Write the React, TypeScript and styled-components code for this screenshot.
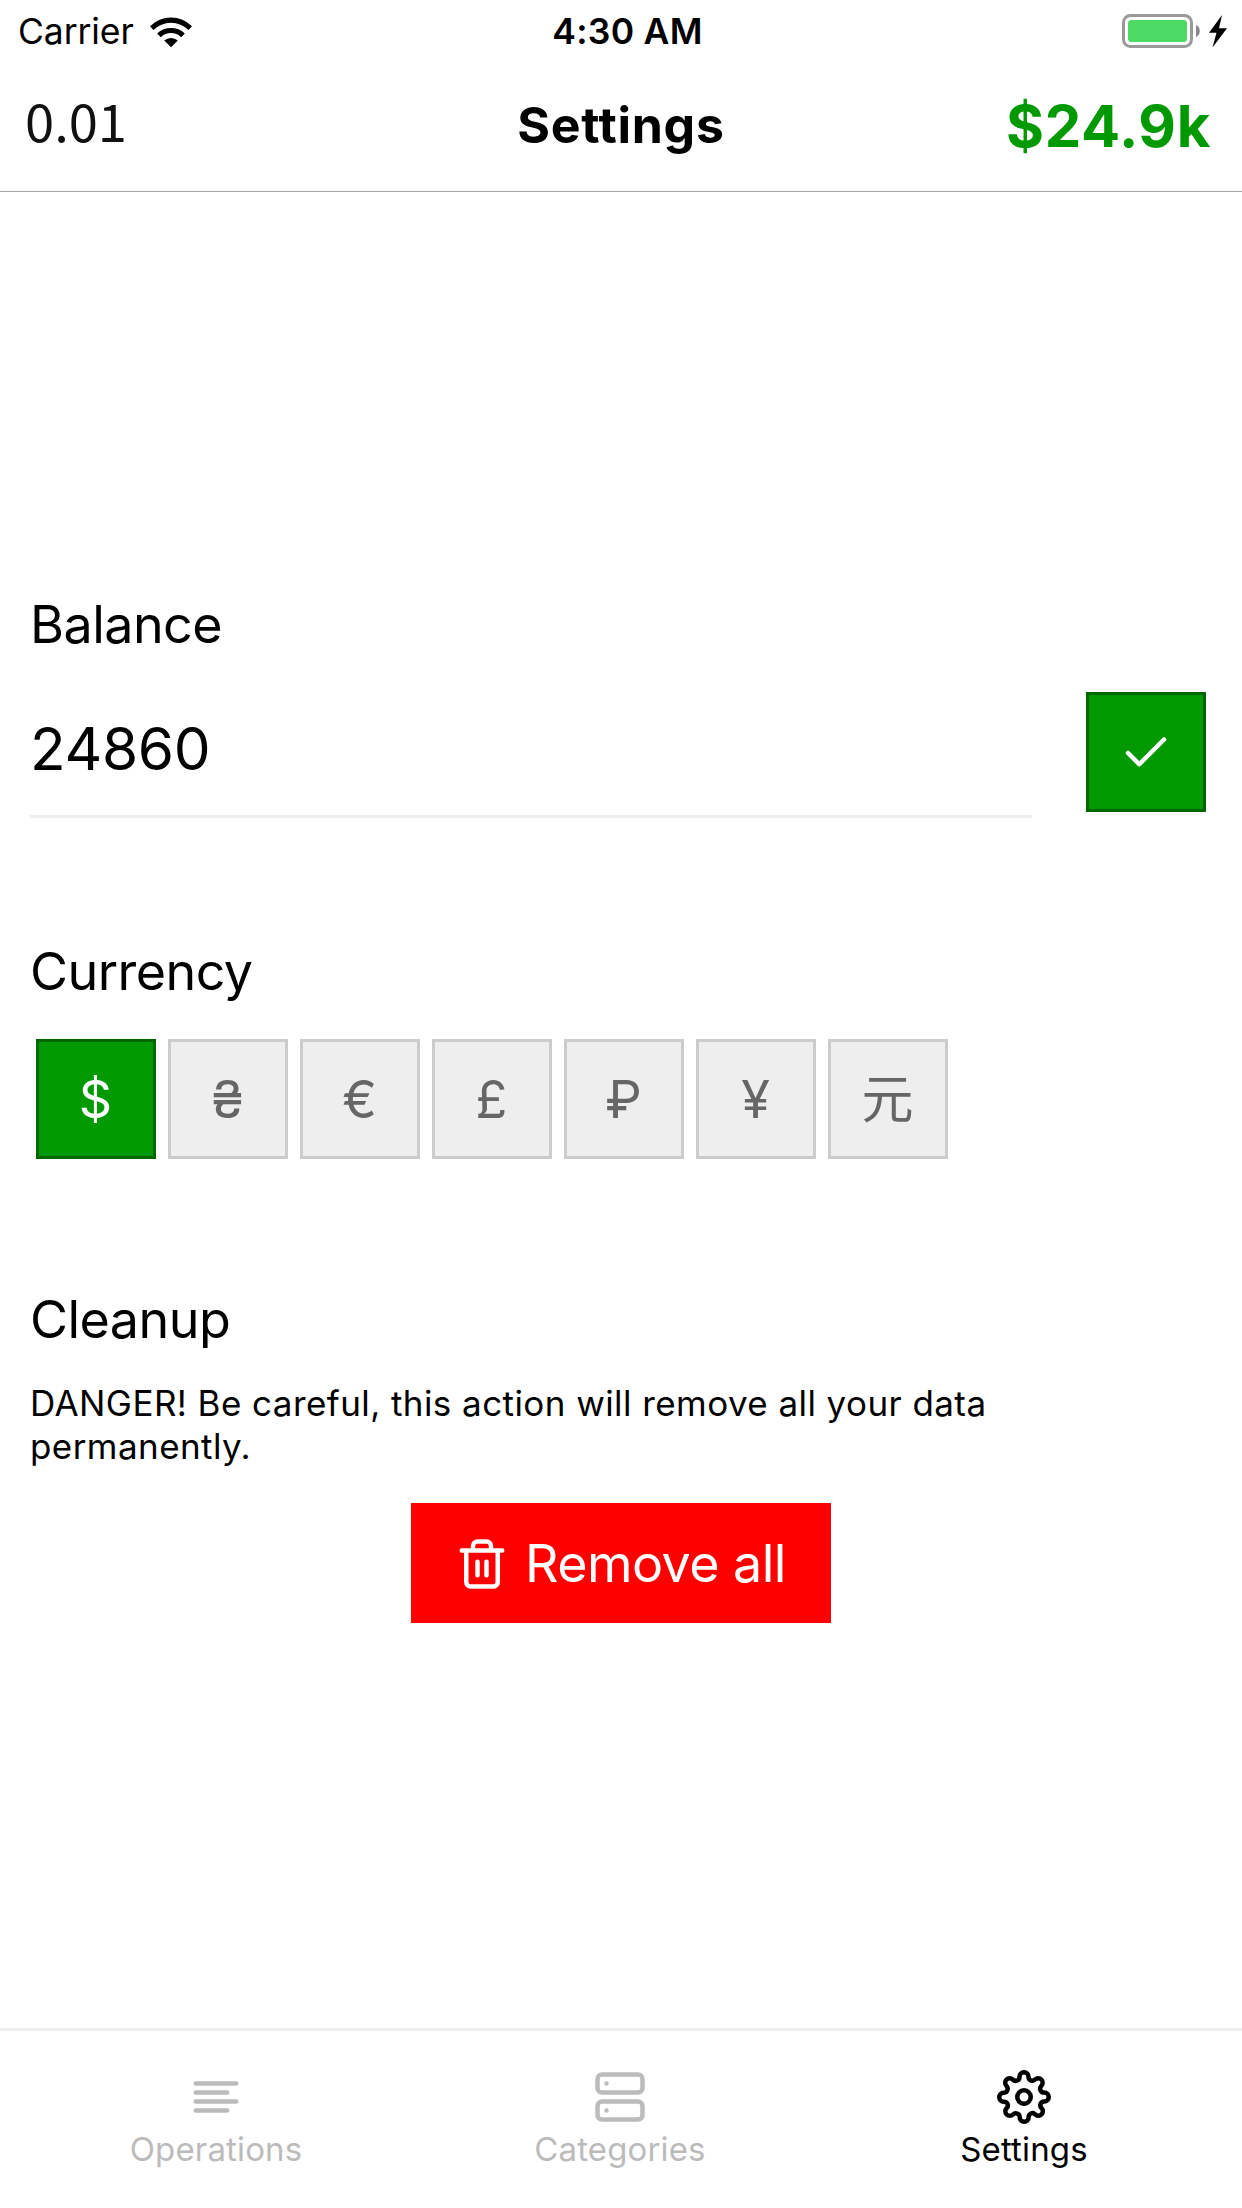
import React from 'react';
import styled, { createGlobalStyle } from 'styled-components';

const GlobalStyle = createGlobalStyle`
  * { box-sizing: border-box; }
  body { margin: 0; background: #fff; }
`;

const Screen = styled.div`
  width: 1242px;
  height: 2208px;
  display: flex;
  flex-direction: column;
  overflow: hidden;
  background: #fff;
  color: #000;
  font-family: Inter, "Liberation Sans", "Noto Sans CJK SC", sans-serif;
`;

const StatusBar = styled.div`
  display: grid;
  grid-template-columns: 1fr auto 1fr;
  align-items: center;
  height: 60px;
  padding: 2px 14px 0 18px;
  font-size: 35.5px;
  line-height: 60px;
`;

const StatusGroup = styled.div<{ $end?: boolean }>`
  display: flex;
  align-items: center;
  justify-content: ${(p) => (p.$end ? 'flex-end' : 'flex-start')};
  padding-bottom: ${(p) => (p.$end ? 3 : 0)}px;
`;

const Carrier = styled.span`
  width: 132px;
  letter-spacing: -0.1px;
`;

const Clock = styled.span`
  font-weight: 600;
  letter-spacing: 0.3px;
  padding-left: 9px;
`;

const Header = styled.header`
  display: grid;
  grid-template-columns: 1fr auto 1fr;
  align-items: center;
  height: 132px;
  padding: 0 31px 0 25px;
  border-bottom: 1px solid #a7a7aa;
`;

const Version = styled.span`
  padding-bottom: 14px;
  font-family: "Noto Sans CJK SC", sans-serif;
  font-size: 52.5px;
  line-height: 60px;
  color: #111;
`;

const Title = styled.h1`
  margin: 0;
  padding: 0 0 2px 6px;
  font-size: 50px;
  line-height: 64px;
  font-weight: 700;
  letter-spacing: 0.7px;
`;

const Total = styled.span`
  text-align: right;
  font-size: 58px;
  line-height: 64px;
  font-weight: 700;
  letter-spacing: 0.7px;
  color: #090;
`;

const Main = styled.main`
  flex: 1;
  padding: 401px 36px 0 30px;
`;

const Section = styled.section<{ $gap?: number }>`
  margin-top: ${(p) => p.$gap ?? 0}px;
`;

const Heading = styled.h2`
  margin: 0;
  font-size: 52px;
  line-height: 64px;
  font-weight: 400;
  letter-spacing: -0.53px;
`;

const BalanceRow = styled.div`
  display: flex;
  justify-content: space-between;
  margin-top: 35px;
`;

const BalanceField = styled.div`
  width: 1002px;
  padding-bottom: 9px;
  border-bottom: 3px solid #eee;
  font-size: 58.5px;
  line-height: 114px;
  letter-spacing: -0.3px;
`;

const Square = styled.button<{ $active?: boolean }>`
  display: flex;
  align-items: center;
  justify-content: center;
  flex: none;
  width: 120px;
  height: 120px;
  padding: 1px 1px 0 0;
  border: 3px solid ${(p) => (p.$active ? '#060' : '#ccc')};
  border-radius: 0;
  background: ${(p) => (p.$active ? '#090' : '#eee')};
  color: ${(p) => (p.$active ? '#fff' : '#666')};
  font-family: inherit;
  font-size: 52px;
  line-height: 65px;
`;

const Currencies = styled.div`
  display: flex;
  gap: 12px;
  margin-top: 35px;
  padding-left: 6px;
`;

const Warning = styled.p`
  width: 1000px;
  margin: 30px 0 35px;
  font-size: 35px;
  line-height: 43px;
  letter-spacing: 0.43px;
`;

const RemoveButton = styled.button`
  display: flex;
  align-items: center;
  gap: 16px;
  width: 420px;
  height: 120px;
  margin-left: 381px;
  padding: 1px 0 0 44px;
  border: 0;
  background: #f00;
  color: #fff;
  font-family: inherit;
  font-size: 52px;
  line-height: 65px;
  letter-spacing: -0.55px;
  white-space: nowrap;
`;

const TabBar = styled.nav`
  display: flex;
  height: 180px;
  padding: 0 16px 0 14px;
  border-top: 3px solid #eee;
`;

const Tab = styled.div<{ $active?: boolean }>`
  flex: 1;
  display: flex;
  flex-direction: column;
  align-items: center;
  padding-top: 39px;
  color: ${(p) => (p.$active ? '#000' : '#bbb')};
`;

const TabLabel = styled.span`
  margin-top: 4px;
  font-size: 33px;
  line-height: 42px;
  letter-spacing: 0.14px;
`;

const Icon = styled.svg.attrs({ viewBox: '0 0 24 24' })`
  flex: none;
  display: block;
  width: 54px;
  height: 54px;
  fill: none;
  stroke: currentColor;
  stroke-width: 2;
  stroke-linecap: round;
  stroke-linejoin: round;
`;

const CheckIcon = () => (
  <Icon>
    <path d="M20 6 9 17l-5-5" />
  </Icon>
);

const TrashIcon = () => (
  <Icon>
    <path d="M3 6h18M19 6v14a2 2 0 0 1-2 2H7a2 2 0 0 1-2-2V6m3 0V4a2 2 0 0 1 2-2h4a2 2 0 0 1 2 2v2M10 11v6M14 11v6" />
  </Icon>
);

const ListIcon = () => (
  <Icon>
    <path d="M3 6h18M3 10h14M3 14h18M3 18h14" />
  </Icon>
);

const ServerIcon = () => (
  <Icon>
    <rect x="2" y="2" width="20" height="8" rx="2" />
    <rect x="2" y="14" width="20" height="8" rx="2" />
    <path d="M6 6h.01M6 18h.01" />
  </Icon>
);

const GearIcon = () => (
  <Icon>
    <circle cx="12" cy="12" r="3" />
    <path d="M19.4 15a1.65 1.65 0 0 0 .33 1.82l.06.06a2 2 0 0 1 0 2.83 2 2 0 0 1-2.83 0l-.06-.06a1.65 1.65 0 0 0-1.82-.33 1.65 1.65 0 0 0-1 1.51V21a2 2 0 0 1-2 2 2 2 0 0 1-2-2v-.09A1.65 1.65 0 0 0 9 19.4a1.65 1.65 0 0 0-1.82.33l-.06.06a2 2 0 0 1-2.83 0 2 2 0 0 1 0-2.83l.06-.06a1.65 1.65 0 0 0 .33-1.82 1.65 1.65 0 0 0-1.51-1H3a2 2 0 0 1-2-2 2 2 0 0 1 2-2h.09A1.65 1.65 0 0 0 4.6 9a1.65 1.65 0 0 0-.33-1.82l-.06-.06a2 2 0 0 1 0-2.83 2 2 0 0 1 2.83 0l.06.06a1.65 1.65 0 0 0 1.82.33H9a1.65 1.65 0 0 0 1-1.51V3a2 2 0 0 1 2-2 2 2 0 0 1 2 2v.09a1.65 1.65 0 0 0 1 1.51 1.65 1.65 0 0 0 1.82-.33l.06-.06a2 2 0 0 1 2.83 0 2 2 0 0 1 0 2.83l-.06.06a1.65 1.65 0 0 0-.33 1.82V9a1.65 1.65 0 0 0 1.51 1H21a2 2 0 0 1 2 2 2 2 0 0 1-2 2h-.09a1.65 1.65 0 0 0-1.51 1z" />
  </Icon>
);

const WifiIcon = () => (
  <svg width="42" height="31" viewBox="0 0 42 31">
    <path d="M0 9.2A30 30 0 0 1 42 9.2L38.6 13A25 25 0 0 0 3.4 13ZM7.2 16.4A20 20 0 0 1 34.8 16.4L31.2 20.2A14.6 14.6 0 0 0 10.8 20.2ZM14.2 23.6A10 10 0 0 1 27.8 23.6L21 30.3Z" />
  </svg>
);

const BatteryIcon = () => (
  <svg width="106" height="34" viewBox="0 0 106 34">
    <rect x="1.5" y="1.5" width="68" height="31" rx="7" fill="none" stroke="#999" strokeWidth="3" />
    <rect x="6" y="6" width="59" height="22" rx="3.5" fill="#4cd964" />
    <path d="M74 11c5 1.600 5 10.400 0 12z" fill="#888" />
    <path d="M100 1 87 18.800h7.500L90.500 33.500 105 14.200h-8z" />
  </svg>
);

const currencies = ['$', '₴', '€', '£', '₽', '¥', '元'];

export default function App() {
  return (
    <Screen>
      <GlobalStyle />
      <StatusBar>
        <StatusGroup>
          <Carrier>Carrier</Carrier>
          <WifiIcon />
        </StatusGroup>
        <Clock>4:30 AM</Clock>
        <StatusGroup $end>
          <BatteryIcon />
        </StatusGroup>
      </StatusBar>
      <Header>
        <Version>0.01</Version>
        <Title>Settings</Title>
        <Total>$24.9k</Total>
      </Header>
      <Main>
        <Section>
          <Heading>Balance</Heading>
          <BalanceRow>
            <BalanceField>24860</BalanceField>
            <Square $active>
              <CheckIcon />
            </Square>
          </BalanceRow>
        </Section>
        <Section $gap={122}>
          <Heading>Currency</Heading>
          <Currencies>
            {currencies.map((symbol, i) => (
              <Square key={symbol} $active={i === 0}>
                {symbol}
              </Square>
            ))}
          </Currencies>
        </Section>
        <Section $gap={129}>
          <Heading>Cleanup</Heading>
          <Warning>DANGER! Be careful, this action will remove all your data permanently.</Warning>
          <RemoveButton>
            <TrashIcon />
            Remove all
          </RemoveButton>
        </Section>
      </Main>
      <TabBar>
        <Tab>
          <ListIcon />
          <TabLabel>Operations</TabLabel>
        </Tab>
        <Tab>
          <ServerIcon />
          <TabLabel>Categories</TabLabel>
        </Tab>
        <Tab $active>
          <GearIcon />
          <TabLabel>Settings</TabLabel>
        </Tab>
      </TabBar>
    </Screen>
  );
}
